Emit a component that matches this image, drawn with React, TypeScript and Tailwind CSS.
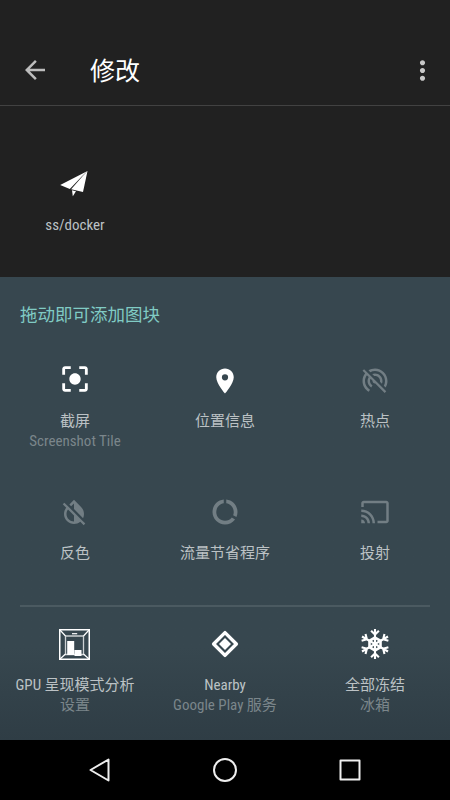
import type { ReactNode } from "react";
import { clsx } from "clsx";
import { MdArrowBack, MdCast, MdCenterFocusStrong, MdDataUsage, MdLocationOn, MdMoreVert } from "react-icons/md";

type TileProps = {
  icon: ReactNode;
  label: string;
  sub?: string;
  dim?: boolean;
};

function Tile({ icon, label, sub, dim }: TileProps) {
  return (
    <div className="flex h-[132px] w-[150px] flex-col items-center">
      <div className={clsx("flex h-8 items-center justify-center", dim ? "text-[#727e84]" : "text-white")}>{icon}</div>
      <div className="mt-[15px] text-[15px] leading-5 whitespace-nowrap text-[#bcc2c5]">{label}</div>
      {sub ? <div className="text-[15px] leading-5 whitespace-nowrap text-[#7b868b]">{sub}</div> : null}
    </div>
  );
}

function PaperPlaneIcon() {
  return (
    <svg className="mr-[3px]" width="28" height="26" viewBox="0 0 28 26" fill="currentColor">
      <path d="M27.5 0 .2 14l9.6 4L22.2 5z" />
      <path d="M27.5 0 23 21l-11.8-2.8L22.5 5.2z" />
      <path d="m12 19.2 4 1-3.2 5z" />
    </svg>
  );
}

function HotspotOffIcon() {
  return (
    <svg className="mt-0.5" width="30" height="30" viewBox="0 0 24 24" fill="currentColor">
      <path d="M17.56 14.24c.28-.69.44-1.45.44-2.24 0-3.31-2.69-6-6-6-.79 0-1.55.16-2.24.44l1.62 1.62c.2-.03.41-.06.62-.06 2.21 0 4 1.79 4 4 0 .21-.02.42-.05.63l1.61 1.61zM12 4c4.42 0 8 3.58 8 8 0 1.35-.35 2.62-.95 3.74l1.47 1.47C21.46 15.69 22 13.91 22 12c0-5.52-4.48-10-10-10-1.91 0-3.69.55-5.21 1.47l1.46 1.46C9.37 4.34 10.65 4 12 4zM3.27 2.5L2 3.77l2.1 2.1C2.79 7.57 2 9.69 2 12c0 3.7 2.01 6.92 4.99 8.65l1-1.73C5.61 17.53 4 14.96 4 12c0-1.76.57-3.38 1.53-4.69l1.43 1.44C6.36 9.68 6 10.8 6 12c0 2.22 1.21 4.15 3 5.19l1-1.74c-1.19-.7-2-1.97-2-3.45 0-.65.17-1.25.44-1.79l1.58 1.58L10 12c0 1.1.9 2 2 2l.21-.01.01.01 7.51 7.51L21 20.23 4.27 3.5l-1-1z" />
    </svg>
  );
}

function InvertOffIcon() {
  return (
    <svg className="mr-0.5" width="30" height="30" viewBox="0 0 24 24" fill="currentColor">
      <path d="M20.65 20.87l-2.35-2.35-6.3-6.29-3.56-3.57-1.42-1.41L4.27 4.5 3 5.77l2.78 2.78c-2.55 3.14-2.36 7.76.56 10.69C7.9 20.8 9.95 21.58 12 21.58c1.79 0 3.57-.59 5.03-1.78l2.7 2.7L21 21.23l-.35-.36zM12 19.59c-1.6 0-3.11-.62-4.24-1.76C6.62 16.69 6 15.19 6 13.59c0-1.32.43-2.57 1.21-3.6L12 14.77v4.82zM12 5.1v4.58l7.25 7.26c1.37-2.96.84-6.57-1.6-9.01L12 2.27l-3.7 3.7 1.41 1.41L12 5.1z" />
    </svg>
  );
}

function GpuIcon() {
  return (
    <svg className="mr-px" width="31" height="31" viewBox="0 0 31 31" fill="none" stroke="currentColor">
      <path d="M.75.75h29.5v29.5H.75z" strokeWidth="1.5" />
      <path d="M6.5 7h18v18.5h-18z" strokeWidth="1.3" opacity=".75" />
      <path d="m1 1 5.5 6M30 1l-5.5 6M1 30l5.5-5M30 30l-5.5-5" strokeWidth="1.2" />
      <path d="M13 4.7h5.2" strokeWidth="1.2" />
      <path d="M8.2 12h7v14h-7zM15.5 21h7v6h-7z" fill="currentColor" stroke="none" />
    </svg>
  );
}

function NearbyIcon() {
  return (
    <svg width="28" height="28" viewBox="0 0 28 28" fill="none" stroke="currentColor" strokeLinejoin="round">
      <path d="M14 2.6 25.4 14 14 25.4 2.6 14z" strokeWidth="3.4" />
      <path d="m14 8 6 6-6 6-6-6z" fill="currentColor" stroke="none" />
    </svg>
  );
}

function SnowflakeIcon() {
  return (
    <svg width="30" height="32" viewBox="-15 -16 30 32" fill="none" stroke="currentColor" strokeWidth="2.1">
      <path d="M0-6.4 5.5-3.2v6.4L0 6.4l-5.5-3.2v-6.4z" strokeWidth="2.6" />
      {[0, 60, 120, 180, 240, 300].map((deg) => (
        <path key={deg} transform={`rotate(${deg})`} d="M0 0v-15M-3.9-13.2 0-9.4l3.9-3.8" />
      ))}
    </svg>
  );
}

export default function App() {
  return (
    <div className="flex h-[800px] w-[450px] flex-col overflow-hidden bg-[#212121] font-['Roboto','Noto_Sans_CJK_SC',sans-serif] [font-stretch:75%]">
      <header className="flex h-[106px] shrink-0 items-center border-b border-[#424242] pt-[35px] pr-3 pl-5">
        <MdArrowBack className="size-[30px] text-[#bdbdbd]" />
        <h1 className="mt-1 ml-10 flex-1 text-[25px] leading-8 text-white">修改</h1>
        <MdMoreVert className="size-[31px] text-[#c8c8c8]" />
      </header>

      <section className="h-[171px] shrink-0 pt-[62px]">
        <Tile icon={<PaperPlaneIcon />} label="ss/docker" />
      </section>

      <section className="flex h-[463px] shrink-0 flex-col bg-[#37474f] bg-linear-to-b from-[#37474f] from-80% to-[#2f3d45]">
        <h2 className="pt-[26px] pl-5 text-[17.5px] leading-6 text-[#80cbc4]">拖动即可添加图块</h2>
        <div className="mt-[37px] grid grid-cols-3">
          <Tile icon={<MdCenterFocusStrong className="mb-0.5 size-[34px]" />} label="截屏" sub="Screenshot Tile" />
          <Tile icon={<MdLocationOn className="mt-0.5 size-[30px]" />} label="位置信息" />
          <Tile icon={<HotspotOffIcon />} label="热点" dim />
          <Tile icon={<InvertOffIcon />} label="反色" dim />
          <Tile icon={<MdDataUsage className="size-[30px]" />} label="流量节省程序" dim />
          <Tile icon={<MdCast className="size-[30px]" />} label="投射" dim />
        </div>
        <div className="mx-5 -mt-[23px] h-0.5 shrink-0 bg-[#4b5a61]" />
        <div className="mt-[21px] grid grid-cols-3">
          <Tile icon={<GpuIcon />} label="GPU 呈现模式分析" sub="设置" />
          <Tile icon={<NearbyIcon />} label="Nearby" sub="Google Play 服务" />
          <Tile icon={<SnowflakeIcon />} label="全部冻结" sub="冰箱" />
        </div>
      </section>

      <nav className="grid h-[60px] shrink-0 grid-cols-[1fr_125px_1fr] items-center bg-black text-[#eeeeee]">
        <svg className="mr-[51px] justify-self-end" width="24" height="26" viewBox="0 0 24 26" fill="none" stroke="currentColor" strokeWidth="2" strokeLinejoin="round">
          <path d="M20.5 2.5v21L2.5 13z" />
        </svg>
        <svg className="justify-self-center" width="26" height="26" viewBox="0 0 26 26" fill="none" stroke="currentColor" strokeWidth="2">
          <circle cx="13" cy="13" r="11" />
        </svg>
        <svg className="ml-[50px]" width="24" height="24" viewBox="0 0 24 24" fill="none" stroke="currentColor" strokeWidth="2" strokeLinejoin="round">
          <path d="M2.5 2.5h19v19h-19z" />
        </svg>
      </nav>
    </div>
  );
}
